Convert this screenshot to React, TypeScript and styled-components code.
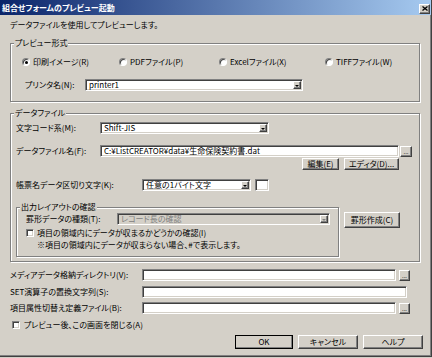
import styled, { createGlobalStyle, css } from "styled-components";

const GlobalStyle = createGlobalStyle`
  html, body {
    margin: 0;
    padding: 0;
    background: #d4d0c8;
  }
  body {
    font-family: "Noto Sans CJK JP", "Liberation Sans", sans-serif;
    font-size: 8px;
    font-feature-settings: "palt";
    color: #000;
  }
`;

const raised = css`
  box-sizing: border-box;
  background: #d4d0c8;
  border: 1px solid;
  border-color: #fff #404040 #404040 #fff;
  box-shadow: inset -1px -1px 0 #808080, inset 1px 1px 0 #d4d0c8;
`;

const sunken = css`
  box-sizing: border-box;
  border: 1px solid;
  border-color: #808080 #fff #fff #808080;
  box-shadow: inset 1px 1px 0 #404040, inset -1px -1px 0 #d4d0c8;
`;

const Window = styled.div`
  width: 432px;
  height: 357px;
  box-sizing: border-box;
  background: #d4d0c8;
  border-right: 1px solid #404040;
  border-bottom: 1px solid #404040;
  box-shadow: inset -1px -1px 0 #808080;
  display: flex;
  flex-direction: column;
`;

const TitleBar = styled.div`
  height: 15px;
  flex: none;
  background: linear-gradient(to right, #0a246a, #a6caf0);
  display: flex;
  align-items: center;
  justify-content: space-between;
  padding: 0 1px 0 2px;
`;

const Title = styled.span`
  color: #fff;
  font-weight: bold;
  line-height: 10px;
`;

const CloseButton = styled.div`
  ${raised};
  width: 11px;
  height: 10px;
  margin-top: 2px;
  display: flex;
  align-items: center;
  justify-content: center;
`;

const Content = styled.div`
  padding: 5px 12px 0 10px;
  display: flex;
  flex-direction: column;
`;

const Text = styled.div<{ $pl?: number; $mt?: number }>`
  line-height: 10px;
  height: 10px;
  white-space: nowrap;
  padding-left: ${(p) => p.$pl ?? 0}px;
  margin-top: ${(p) => p.$mt ?? 0}px;
`;

const Group = styled.fieldset<{ $w: number; $mt?: number }>`
  width: ${(p) => p.$w}px;
  box-sizing: border-box;
  margin: ${(p) => p.$mt ?? 0}px 0 0 0;
  padding: 0 3px;
  min-width: 0;
  border: 1px solid #808080;
  box-shadow: inset 1px 1px 0 #fff, 1px 1px 0 #fff;
`;

const Legend = styled.legend`
  padding: 0 1px;
  line-height: 10px;
  background: #d4d0c8;
`;

const GroupBody = styled.div<{ $pt: number; $pl: number; $pb: number }>`
  padding: ${(p) => p.$pt}px 0 ${(p) => p.$pb}px ${(p) => p.$pl}px;
  display: flex;
  flex-direction: column;
`;

const Row = styled.div<{ $mt?: number; $pl?: number; $h?: number }>`
  display: flex;
  align-items: center;
  height: ${(p) => p.$h ?? 12}px;
  margin-top: ${(p) => p.$mt ?? 0}px;
  padding-left: ${(p) => p.$pl ?? 0}px;
  white-space: nowrap;
`;

const Label = styled.span<{ $w: number }>`
  width: ${(p) => p.$w}px;
  flex: none;
  line-height: 10px;
`;

const Field = styled.div<{ $w: number; $disabled?: boolean; $ml?: number }>`
  ${sunken};
  width: ${(p) => p.$w}px;
  height: 12px;
  flex: none;
  margin-left: ${(p) => p.$ml ?? 0}px;
  background: ${(p) => (p.$disabled ? "#d4d0c8" : "#fff")};
  color: ${(p) => (p.$disabled ? "#808080" : "#000")};
  display: flex;
  align-items: center;
  padding: 1px 1px 1px 3px;
  line-height: 10px;
  overflow: hidden;
`;

const FieldText = styled.span`
  flex: 1;
  overflow: hidden;
`;

const DropArrow = styled.div<{ $disabled?: boolean }>`
  ${raised};
  width: 8px;
  height: 8px;
  flex: none;
  display: flex;
  align-items: center;
  justify-content: center;
  &::after {
    content: "";
    border-left: 2px solid transparent;
    border-right: 2px solid transparent;
    border-top: 2px solid ${(p) => (p.$disabled ? "#808080" : "#000")};
    margin-top: 1px;
  }
`;

const BrowseButton = styled.div<{ $ml: number; $w: number }>`
  ${raised};
  width: ${(p) => p.$w}px;
  height: 11px;
  flex: none;
  margin-left: ${(p) => p.$ml}px;
  display: flex;
  align-items: flex-end;
  justify-content: center;
  font-size: 6px;
  line-height: 7px;
  padding-bottom: 1px;
`;

const PushButton = styled.div<{ $w: number; $h?: number; $default?: boolean }>`
  ${raised};
  width: ${(p) => p.$w}px;
  height: ${(p) => p.$h ?? 12}px;
  flex: none;
  display: flex;
  align-items: center;
  justify-content: center;
  line-height: 10px;
  ${(p) =>
    p.$default &&
    css`
      outline: 1px solid #000;
      outline-offset: -1px;
    `}
`;

const ButtonRow = styled.div<{ $mt: number; $pl: number; $gap: number }>`
  display: flex;
  margin-top: ${(p) => p.$mt}px;
  padding-left: ${(p) => p.$pl}px;
  gap: ${(p) => p.$gap}px;
`;

const RadioRow = styled.div`
  display: flex;
  height: 10px;
  align-items: center;
`;

const RadioItem = styled.label<{ $w?: number }>`
  display: flex;
  align-items: center;
  gap: 3px;
  width: ${(p) => (p.$w ? `${p.$w}px` : "auto")};
  flex: none;
  line-height: 10px;
  white-space: nowrap;
`;

const Radio = styled.span<{ $checked?: boolean }>`
  ${sunken};
  width: 8px;
  height: 8px;
  border-radius: 50%;
  background: #fff;
  box-shadow: inset 1px 1px 0 #404040;
  display: flex;
  align-items: center;
  justify-content: center;
  &::after {
    content: "";
    width: 3px;
    height: 3px;
    border-radius: 50%;
    background: ${(p) => (p.$checked ? "#000" : "transparent")};
  }
`;

const CheckItem = styled.label<{ $pl: number; $gap: number; $mt: number }>`
  display: flex;
  align-items: center;
  gap: ${(p) => p.$gap}px;
  height: 10px;
  margin-top: ${(p) => p.$mt}px;
  padding-left: ${(p) => p.$pl}px;
  line-height: 10px;
  white-space: nowrap;
`;

const CheckBox = styled.span`
  ${sunken};
  width: 8px;
  height: 8px;
  flex: none;
  background: #fff;
`;

const SubRow = styled.div`
  display: flex;
  align-items: flex-start;
  margin-top: 11px;
`;

const SideButton = styled(PushButton)`
  margin: 10px 0 0 5px;
`;

interface SelectProps {
  w: number;
  value?: string;
  disabled?: boolean;
}

const Select = ({ w, value, disabled }: SelectProps) => (
  <Field $w={w} $disabled={disabled}>
    <FieldText>{value}</FieldText>
    <DropArrow $disabled={disabled} />
  </Field>
);

const App = () => {
  return (
    <>
      <GlobalStyle />
      <Window>
        <TitleBar>
          <Title>組合せフォームのプレビュー起動</Title>
          <CloseButton>
            <svg width="6" height="5" viewBox="0 0 6 5">
              <path d="M0.5 0.5 L5.5 4.5 M5.5 0.5 L0.5 4.5" stroke="#000" strokeWidth="1.3" />
            </svg>
          </CloseButton>
        </TitleBar>
        <Content>
          <Text>データファイルを使用してプレビューします。</Text>

          <Group $w={410} $mt={8}>
            <Legend>プレビュー形式</Legend>
            <GroupBody $pt={9} $pl={8} $pb={10}>
              <RadioRow>
                <RadioItem $w={97}>
                  <Radio $checked />
                  印刷イメージ(R)
                </RadioItem>
                <RadioItem $w={100}>
                  <Radio />
                  PDFファイル(P)
                </RadioItem>
                <RadioItem $w={106}>
                  <Radio />
                  Excelファイル(X)
                </RadioItem>
                <RadioItem>
                  <Radio />
                  TIFFファイル(W)
                </RadioItem>
              </RadioRow>
              <Row $mt={12} $pl={3}>
                <Label $w={60}>プリンタ名(N):</Label>
                <Select w={218} value="printer1" />
              </Row>
            </GroupBody>
          </Group>

          <Group $w={410} $mt={6}>
            <Legend>データファイル</Legend>
            <GroupBody $pt={4} $pl={2} $pb={4}>
              <Row>
                <Label $w={84}>文字コード系(M):</Label>
                <Select w={169} value="Shift-JIS" />
              </Row>
              <Row $mt={11}>
                <Label $w={84}>データファイル名(F):</Label>
                <Field $w={299}>
                  <FieldText>C:¥ListCREATOR¥data¥生命保険契約書.dat</FieldText>
                </Field>
                <BrowseButton $ml={1} $w={12}>...</BrowseButton>
              </Row>
              <ButtonRow $mt={1} $pl={286} $gap={5}>
                <PushButton $w={37}>編集(E)</PushButton>
                <PushButton $w={55}>エディタ(D)...</PushButton>
              </ButtonRow>
              <Row $mt={9}>
                <Label $w={126}>帳票名データ区切り文字(K):</Label>
                <Select w={109} value="任意の1バイト文字" />
                <Field $w={14} $ml={4} />
              </Row>
              <SubRow>
                <Group $w={323}>
                  <Legend>出力レイアウトの確認</Legend>
                  <GroupBody $pt={1} $pl={6} $pb={6}>
                    <Row>
                      <Label $w={91}>罫形データの種類(T):</Label>
                      <Select w={213} value="レコード長の確認" disabled />
                    </Row>
                    <CheckItem $pl={0} $gap={3} $mt={3}>
                      <CheckBox />
                      項目の領域内にデータが収まるかどうかの確認(I)
                    </CheckItem>
                    <Text $pl={11} $mt={2}>
                      ※項目の領域内にデータが収まらない場合、#で表示します。
                    </Text>
                  </GroupBody>
                </Group>
                <SideButton $w={56} $h={16}>罫形作成(C)</SideButton>
              </SubRow>
            </GroupBody>
          </Group>

          <Row $mt={7}>
            <Label $w={132}>メディアデータ格納ディレクトリ(V):</Label>
            <Field $w={254} />
            <BrowseButton $ml={3} $w={11}>...</BrowseButton>
          </Row>
          <Row $mt={5}>
            <Label $w={132}>SET演算子の置換文字列(S):</Label>
            <Field $w={265} />
          </Row>
          <Row $mt={4}>
            <Label $w={132}>項目属性切替え定義ファイル(B):</Label>
            <Field $w={254} />
            <BrowseButton $ml={3} $w={11}>...</BrowseButton>
          </Row>
          <CheckItem $pl={2} $gap={4} $mt={6}>
            <CheckBox />
            プレビュー後、この画面を閉じる(A)
          </CheckItem>
          <ButtonRow $mt={5} $pl={225} $gap={5}>
            <PushButton $w={58} $h={14} $default>
              OK
            </PushButton>
            <PushButton $w={60} $h={14}>
              キャンセル
            </PushButton>
            <PushButton $w={60} $h={14}>
              ヘルプ
            </PushButton>
          </ButtonRow>
        </Content>
      </Window>
    </>
  );
};

export default App;
